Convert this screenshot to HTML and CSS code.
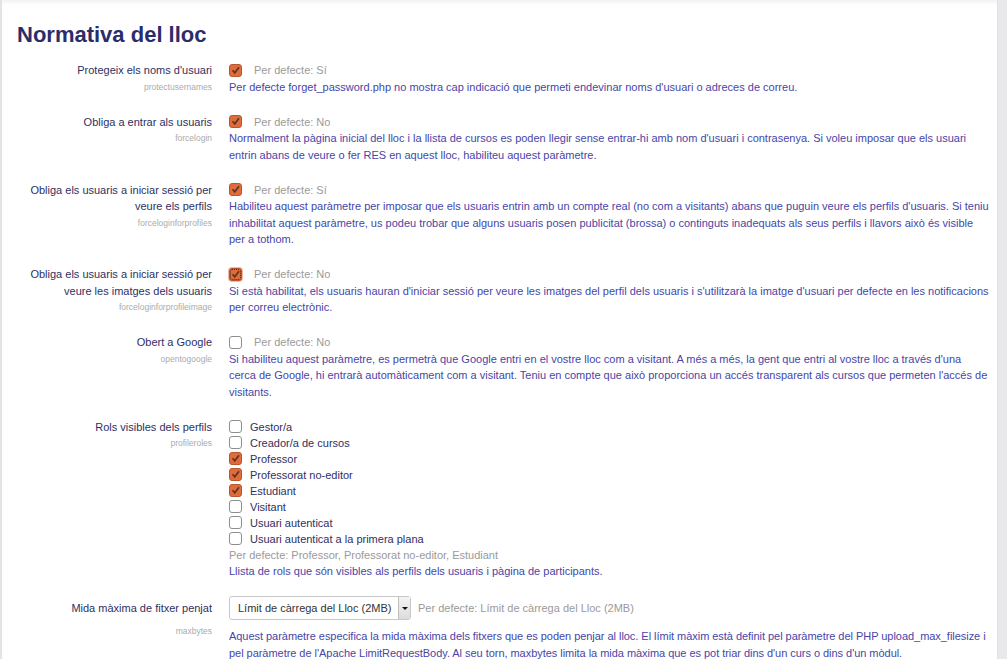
FILE: index.html
```html
<!DOCTYPE html>
<html lang="ca">
<head>
<meta charset="utf-8">
<title>Normativa del lloc</title>
<link rel="stylesheet" href="styles.css">
</head>
<body>
<div class="frame">
  <main class="page">
    <h2 class="page-title">Normativa del lloc</h2>

    <div class="setting">
      <div class="label"><div class="title">Protegeix els noms d'usuari</div><div class="name">protectusernames</div></div>
      <div class="content">
        <div class="control"><span class="cb checked"><svg viewBox="0 0 13 13"><path d="M3 6.2 L5.6 9.2 L10.6 2.6" /></svg></span><span class="default">Per defecte: Sí</span></div>
        <div class="desc">Per defecte forget_password.php no mostra cap indicació que permeti endevinar noms d'usuari o adreces de correu.</div>
      </div>
    </div>

    <div class="setting">
      <div class="label"><div class="title">Obliga a entrar als usuaris</div><div class="name">forcelogin</div></div>
      <div class="content">
        <div class="control"><span class="cb checked"><svg viewBox="0 0 13 13"><path d="M3 6.2 L5.6 9.2 L10.6 2.6" /></svg></span><span class="default">Per defecte: No</span></div>
        <div class="desc">Normalment la pàgina inicial del lloc i la llista de cursos es poden llegir sense entrar-hi amb nom d'usuari i contrasenya. Si voleu imposar que els usuari entrin abans de veure o fer RES en aquest lloc, habiliteu aquest paràmetre.</div>
      </div>
    </div>

    <div class="setting">
      <div class="label"><div class="title">Obliga els usuaris a iniciar sessió per veure els perfils</div><div class="name">forceloginforprofiles</div></div>
      <div class="content">
        <div class="control"><span class="cb checked"><svg viewBox="0 0 13 13"><path d="M3 6.2 L5.6 9.2 L10.6 2.6" /></svg></span><span class="default">Per defecte: Sí</span></div>
        <div class="desc">Habiliteu aquest paràmetre per imposar que els usuaris entrin amb un compte real (no com a visitants) abans que puguin veure els perfils d'usuaris. Si teniu inhabilitat aquest paràmetre, us podeu trobar que alguns usuaris posen publicitat (brossa) o continguts inadequats als seus perfils i llavors això és visible per a tothom.</div>
      </div>
    </div>

    <div class="setting">
      <div class="label"><div class="title">Obliga els usuaris a iniciar sessió per veure les imatges dels usuaris</div><div class="name">forceloginforprofileimage</div></div>
      <div class="content">
        <div class="control"><span class="cb checked focused"><svg viewBox="0 0 13 13"><path d="M3 6.2 L5.6 9.2 L10.6 2.6" /></svg></span><span class="default">Per defecte: No</span></div>
        <div class="desc">Si està habilitat, els usuaris hauran d'iniciar sessió per veure les imatges del perfil dels usuaris i s'utilitzarà la imatge d'usuari per defecte en les notificacions per correu electrònic.</div>
      </div>
    </div>

    <div class="setting">
      <div class="label"><div class="title">Obert a Google</div><div class="name">opentogoogle</div></div>
      <div class="content">
        <div class="control"><span class="cb"></span><span class="default">Per defecte: No</span></div>
        <div class="desc">Si habiliteu aquest paràmetre, es permetrà que Google entri en el vostre lloc com a visitant. A més a més, la gent que entri al vostre lloc a través d'una cerca de Google, hi entrarà automàticament com a visitant. Teniu en compte que això proporciona un accés transparent als cursos que permeten l'accés de visitants.</div>
      </div>
    </div>

    <div class="setting roles-setting">
      <div class="label"><div class="title">Rols visibles dels perfils</div><div class="name">profileroles</div></div>
      <div class="content">
        <ul class="checklist">
          <li><span class="cb"></span>Gestor/a</li>
          <li><span class="cb"></span>Creador/a de cursos</li>
          <li><span class="cb checked"><svg viewBox="0 0 13 13"><path d="M3 6.2 L5.6 9.2 L10.6 2.6" /></svg></span>Professor</li>
          <li><span class="cb checked"><svg viewBox="0 0 13 13"><path d="M3 6.2 L5.6 9.2 L10.6 2.6" /></svg></span>Professorat no-editor</li>
          <li><span class="cb checked"><svg viewBox="0 0 13 13"><path d="M3 6.2 L5.6 9.2 L10.6 2.6" /></svg></span>Estudiant</li>
          <li><span class="cb"></span>Visitant</li>
          <li><span class="cb"></span>Usuari autenticat</li>
          <li><span class="cb"></span>Usuari autenticat a la primera plana</li>
        </ul>
        <div class="default block">Per defecte: Professor, Professorat no-editor, Estudiant</div>
        <div class="desc">Llista de rols que són visibles als perfils dels usuaris i pàgina de participants.</div>
      </div>
    </div>

    <div class="setting select-setting">
      <div class="label"><div class="title">Mida màxima de fitxer penjat</div><div class="name">maxbytes</div></div>
      <div class="content">
        <div class="control"><span class="select"><span class="select-text">Límit de càrrega del Lloc (2MB)</span><span class="select-btn"><span class="tri"></span></span></span><span class="default">Per defecte: Límit de càrrega del Lloc (2MB)</span></div>
        <div class="desc">Aquest paràmetre especifica la mida màxima dels fitxers que es poden penjar al lloc. El límit màxim està definit pel paràmetre del PHP upload_max_filesize i pel paràmetre de l'Apache LimitRequestBody. Al seu torn, maxbytes limita la mida màxima que es pot triar dins d'un curs o dins d'un mòdul.</div>
      </div>
    </div>
  </main>
  <div class="scrollbar"></div>
</div>
</body>
</html>
```

FILE: styles.css
```css
html, body {
  margin: 0;
  padding: 0;
  background: #ffffff;
}

body {
  font-family: "Liberation Sans", Arial, sans-serif;
  font-size: 11px;
  color: #333366;
  overflow: hidden;
}

.frame {
  display: flex;
  height: 659px;
  border-left: 2px solid #e4e4e4;
  background: linear-gradient(#f2f2f2, #ffffff 5px);
}

.page {
  flex: 1;
  padding: 0 6px 0 0;
}

.scrollbar {
  width: 9px;
  background: #e9e9eb;
  border-left: 1px solid #e0e0e2;
}

.page-title {
  margin: 20px 0 12px 15px;
  font-size: 22px;
  line-height: 30px;
  font-weight: bold;
  color: #2b2d6b;
}

.setting {
  display: grid;
  grid-template-columns: 210px 1fr;
  column-gap: 17px;
  margin-bottom: 18.5px;
}

.roles-setting {
  margin-bottom: 16.5px;
}

.label {
  text-align: right;
  padding-left: 18px;
}

.label .title {
  line-height: 16.5px;
  color: #2f2f62;
}

.label .name {
  font-size: 8.5px;
  line-height: 16.5px;
  color: #ababab;
}

.control {
  display: flex;
  align-items: center;
  height: 16.5px;
}

.cb {
  display: inline-block;
  box-sizing: border-box;
  width: 13px;
  height: 13px;
  border: 1px solid #8e8e8e;
  border-radius: 3px;
  background: #ffffff;
  flex: none;
  position: relative;
}

.cb svg {
  display: block;
  width: 11px;
  height: 11px;
}

.cb svg path {
  fill: none;
  stroke: #5b3524;
  stroke-width: 2;
}

.cb.checked {
  background: #e06c3c;
  border-color: #b9582f;
}

.cb.focused {
  box-shadow: 0 0 0 1px #f3b99c;
  outline: 1px dotted #333;
  outline-offset: -2px;
}

.default {
  margin-left: 12px;
  color: #9a9a9a;
}

.default.block {
  margin-left: 0;
  line-height: 16.5px;
}

.desc {
  line-height: 16.5px;
  color: #4646a8;
}

.checklist {
  list-style: none;
  margin: 0;
  padding: 0;
}

.checklist li {
  display: flex;
  align-items: center;
  height: 16px;
  gap: 8px;
  color: #2f2f62;
}

.select-setting .label .title {
  line-height: 24px;
}

.select-setting .label .name {
  margin-top: 3px;
}

.select-setting .control {
  height: 24px;
  margin-bottom: 8px;
}

.select-setting .desc {
  letter-spacing: -0.04px;
}

.select {
  display: flex;
  align-items: stretch;
  box-sizing: border-box;
  width: 182px;
  height: 24px;
  border: 1px solid #c8c8c8;
  border-radius: 3px;
  background: #ffffff;
}

.select-text {
  flex: 1;
  padding-left: 8px;
  line-height: 22px;
  color: #333;
  white-space: nowrap;
}

.select-btn {
  width: 11px;
  display: flex;
  align-items: center;
  justify-content: center;
  background: linear-gradient(#f4f4f4, #dcdcdc);
  border-left: 1px solid #bdbdbd;
}

.tri {
  width: 0;
  height: 0;
  border-left: 3px solid transparent;
  border-right: 3px solid transparent;
  border-top: 3px solid #111;
}

.select-setting .default {
  margin-left: 7px;
}
```
